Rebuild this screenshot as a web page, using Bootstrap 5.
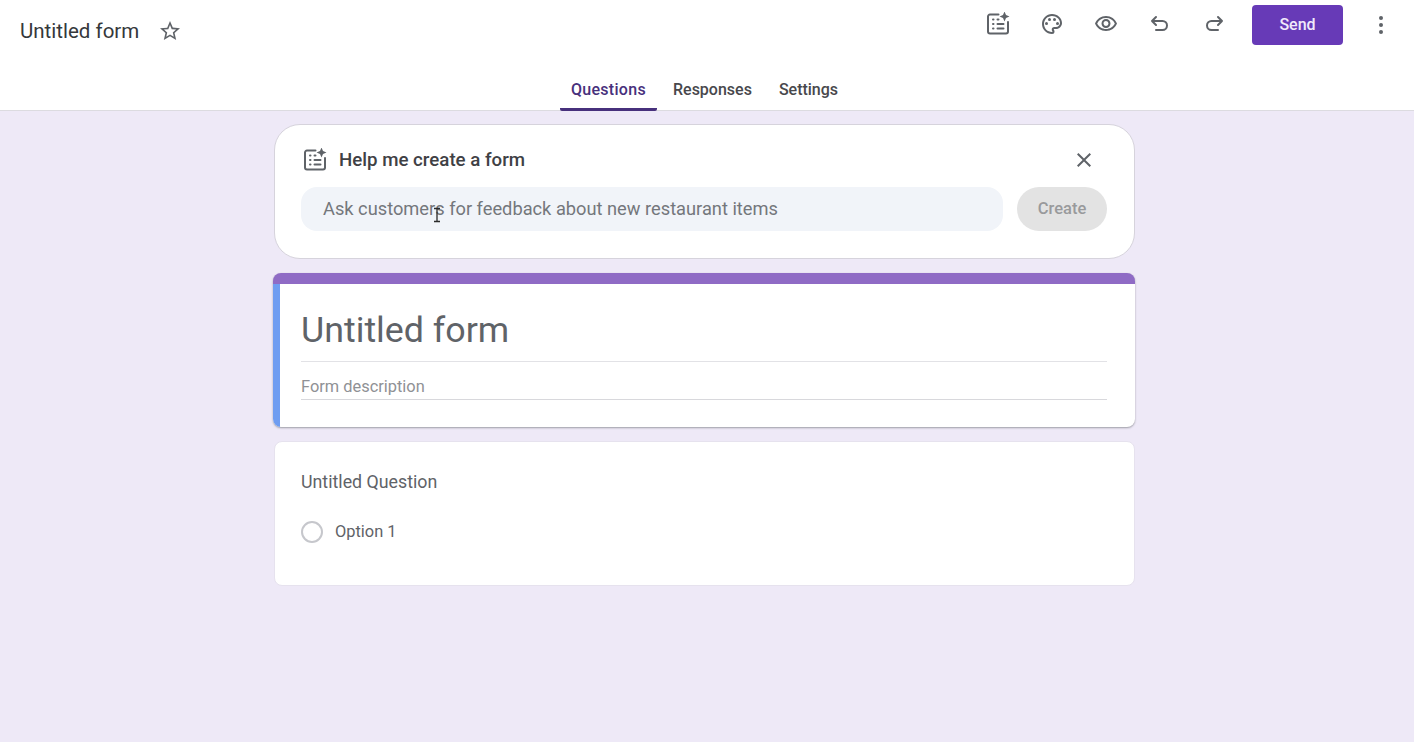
<!DOCTYPE html>
<html lang="en">
<head>
    <meta charset="UTF-8">
    <meta name="viewport" content="width=device-width, initial-scale=1.0">
    <title>Untitled form</title>
    <link href="https://cdn.jsdelivr.net/npm/bootstrap@5.3.0/dist/css/bootstrap.min.css" rel="stylesheet">
    <style>
        body {
            font-family: Roboto, "Liberation Sans", sans-serif;
            background: #eee9f7;
            height: 742px;
            overflow: hidden;
            color: #5f6368;
        }
        .top-head {
            background: #fff;
            height: 111px;
            border-bottom: 1px solid #dcdbe0;
        }
        .top-row {
            height: 78px;
            padding: 5px 21px 0 20px;
        }
        .doc-name {
            font-size: 20.5px;
            line-height: 24px;
            color: #35383b;
            margin-top: 14px;
        }
        .star-ic {
            margin: 14px 0 0 19px;
        }
        .tool-set {
            gap: 30px;
            margin-top: 7px;
            margin-right: 26px;
        }
        .ic {
            width: 24px;
            height: 24px;
            fill: #5f6368;
            display: block;
        }
        .ic-line {
            fill: none;
            stroke: #5f6368;
            stroke-width: 2;
            stroke-linecap: round;
            stroke-linejoin: round;
        }
        .send-btn {
            width: 91px;
            height: 40px;
            background: #673ab7;
            border: 0;
            border-radius: 4px;
            color: #f1eafb;
            font-size: 16px;
            font-weight: 500;
            margin-right: 26px;
        }
        .tab-row {
            padding-right: 5px;
            gap: 5px;
        }
        .tab-item {
            font-size: 16px;
            font-weight: 500;
            line-height: 20px;
            padding: 2px 11px 8px;
            height: 33px;
            color: #48484c;
            border-bottom: 3px solid transparent;
        }
        .tab-on {
            color: #47307c;
            letter-spacing: .3px;
            border-bottom-color: #47307c;
            border-radius: 0 0 2px 2px;
        }
        .form-col {
            width: 861px;
            margin: 13px 0 0 274px;
            gap: 14px;
        }
        .ask-box {
            height: 135px;
            background: #fff;
            border: 1px solid #d6d3dc;
            border-radius: 26px;
            padding: 23px 26px 0;
        }
        .ask-title {
            font-size: 18.7px;
            font-weight: 500;
            color: #3f4145;
            line-height: 24px;
            padding-left: 2px;
        }
        .ask-title svg {
            margin-right: 12px;
        }
        .ask-title .x-ic {
            margin: 0 12px 0 auto;
        }
        .ask-row {
            margin-top: 15px;
            gap: 14px;
        }
        .ask-input {
            width: 702px;
            height: 44px;
            background: #f1f4f9;
            border-radius: 16px;
            padding-left: 22px;
            font-size: 18.25px;
            line-height: 44px;
            color: #74777c;
        }
        .ibeam {
            position: absolute;
            left: 132px;
            top: 20px;
        }
        .create-btn {
            width: 90px;
            height: 44px;
            background: #e3e3e3;
            border: 0;
            border-radius: 22px;
            color: #999a9c;
            font-size: 16.5px;
            font-weight: 500;
        }
        .title-box {
            height: 154px;
            margin-left: -1px;
            background: #fff;
            border-radius: 8px;
            border-top: 11px solid #8f6bc5;
            box-shadow: 0 1px 2px rgba(60, 64, 67, .45);
            overflow: hidden;
        }
        .blue-edge {
            width: 7px;
            background: #6f9df1;
        }
        .title-body {
            padding: 0 28px 0 21px;
        }
        .big-title {
            font-size: 35.8px;
            line-height: 43px;
            padding: 25px 0 9px;
            color: #5f6368;
            border-bottom: 1px solid #e2e2e6;
        }
        .desc-line {
            font-size: 16.4px;
            line-height: 20px;
            padding: 15px 0 2px;
            color: #8f9195;
            border-bottom: 1px solid #d8d8dc;
        }
        .q-box {
            height: 145px;
            background: #fff;
            border: 1px solid #e6e2ee;
            border-radius: 8px;
            padding: 29px 26px 0;
        }
        .q-name {
            font-size: 17.8px;
            line-height: 22px;
            color: #5f6368;
        }
        .radio-dot {
            width: 22px;
            height: 22px;
            border: 2px solid #c6c7cc;
            border-radius: 50%;
            margin-right: 12px;
        }
        .opt-row {
            margin-top: 27px;
            font-size: 16.4px;
            color: #5f6368;
        }
    </style>
</head>
<body>
    <header class="top-head">
        <div class="top-row d-flex align-items-start">
            <div class="doc-name">Untitled form</div>
            <svg class="ic star-ic" viewBox="0 0 24 24"><path d="M22 9.24l-7.19-.62L12 2 9.19 8.63 2 9.24l5.46 4.73L5.82 21 12 17.27 18.18 21l-1.63-7.03L22 9.24zM12 15.4l-3.76 2.27 1-4.28-3.32-2.88 4.38-.38L12 6.1l1.71 4.04 4.38.38-3.32 2.88 1 4.28L12 15.4z"/></svg>
            <div class="d-flex tool-set ms-auto">
                <svg class="ic" viewBox="0 0 24 24"><path class="ic-line" d="M12.500 2.500H4a2 2 0 0 0-2 2v15a2 2 0 0 0 2 2h16a2 2 0 0 0 2-2V10"/><path class="ic-line" d="M7 7.500h.5M7 12h.5M7 16.500h.5M11.500 7.500h1M11.500 12h6M11.500 16.500h6"/><path d="M18.500-.5l1.500 3.500 3.500 1.500-3.500 1.500-1.500 3.500-1.500-3.500-3.500-1.500 3.500-1.500z"/></svg>
                <svg class="ic" viewBox="0 0 24 24"><path d="M12 22C6.490 22 2 17.510 2 12S6.490 2 12 2s10 4.040 10 9c0 3.310-2.690 6-6 6h-1.770c-.28 0-.5.220-.5.500 0 .120.050.230.130.330.410.470.640 1.060.640 1.670A2.500 2.500 0 0 1 12 22zm0-18c-4.410 0-8 3.590-8 8s3.590 8 8 8c.28 0 .5-.22.5-.5a.54.54 0 0 0-.14-.35c-.41-.46-.63-1.050-.63-1.650a2.500 2.500 0 0 1 2.500-2.500H16c2.210 0 4-1.790 4-4 0-3.860-3.590-7-8-7z"/><circle cx="6.500" cy="11.500" r="1.500"/><circle cx="9.500" cy="7.500" r="1.500"/><circle cx="14.500" cy="7.500" r="1.500"/><circle cx="17.500" cy="11.500" r="1.500"/></svg>
                <svg class="ic" viewBox="0 0 24 24"><path d="M12 6a9.770 9.770 0 0 1 8.820 5.500C19.170 14.870 15.790 17 12 17s-7.170-2.130-8.820-5.500A9.770 9.770 0 0 1 12 6m0-2C7 4 2.730 7.110 1 11.500 2.730 15.890 7 19 12 19s9.270-3.110 11-7.500C21.270 7.110 17 4 12 4zm0 5a2.500 2.500 0 0 1 0 5 2.500 2.500 0 0 1 0-5m0-2c-2.480 0-4.500 2.020-4.500 4.500S9.520 16 12 16s4.500-2.020 4.500-4.500S14.480 7 12 7z"/></svg>
                <svg class="ic" viewBox="0 0 24 24"><path class="ic-line" d="M8 5L4 9l4 4M4 9h10.500a4.500 4.500 0 0 1 0 9H8"/></svg>
                <svg class="ic" viewBox="0 0 24 24"><path class="ic-line" d="M16 5l4 4-4 4M20 9H9.500a4.500 4.500 0 0 0 0 9H16"/></svg>
            </div>
            <button class="send-btn" type="button">Send</button>
            <svg class="ic" style="margin-top:8px" viewBox="0 0 24 24"><circle cx="12" cy="5" r="2"/><circle cx="12" cy="12" r="2"/><circle cx="12" cy="19" r="2"/></svg>
        </div>
        <nav class="d-flex justify-content-center tab-row">
            <div class="tab-item tab-on">Questions</div>
            <div class="tab-item">Responses</div>
            <div class="tab-item">Settings</div>
        </nav>
    </header>

    <main class="form-col d-flex flex-column">
        <section class="ask-box">
            <div class="ask-title d-flex align-items-center">
                <svg class="ic" viewBox="0 0 24 24"><path class="ic-line" d="M12.500 2.500H4a2 2 0 0 0-2 2v15a2 2 0 0 0 2 2h16a2 2 0 0 0 2-2V10"/><path class="ic-line" d="M7 7.500h.5M7 12h.5M7 16.500h.5M11.500 7.500h1M11.500 12h6M11.500 16.500h6"/><path d="M18.500-.5l1.500 3.500 3.500 1.500-3.500 1.500-1.500 3.500-1.500-3.500-3.500-1.500 3.500-1.500z"/></svg>
                <span>Help me create a form</span>
                <svg class="ic x-ic" viewBox="0 0 24 24"><path d="M19 6.410 17.590 5 12 10.590 6.410 5 5 6.410 10.590 12 5 17.590 6.410 19 12 13.410 17.590 19 19 17.590 13.410 12z"/></svg>
            </div>
            <div class="ask-row d-flex">
                <div class="ask-input position-relative">Ask customers for feedback about new restaurant items
                    <svg class="ibeam" width="8" height="16" viewBox="0 0 8 16"><path d="M1 1.500h6M1 14.500h6M4 1.500v13" fill="none" stroke="#2b2b2b" stroke-width="1.300"/></svg>
                </div>
                <button class="create-btn" type="button">Create</button>
            </div>
        </section>

        <section class="title-box d-flex">
            <div class="blue-edge"></div>
            <div class="title-body flex-grow-1">
                <div class="big-title">Untitled form</div>
                <div class="desc-line">Form description</div>
            </div>
        </section>

        <section class="q-box">
            <div class="q-name">Untitled Question</div>
            <div class="opt-row d-flex align-items-center">
                <div class="radio-dot"></div>
                <span>Option 1</span>
            </div>
        </section>
    </main>

    <script src="https://cdn.jsdelivr.net/npm/bootstrap@5.3.0/dist/js/bootstrap.bundle.min.js"></script>
</body>
</html>
